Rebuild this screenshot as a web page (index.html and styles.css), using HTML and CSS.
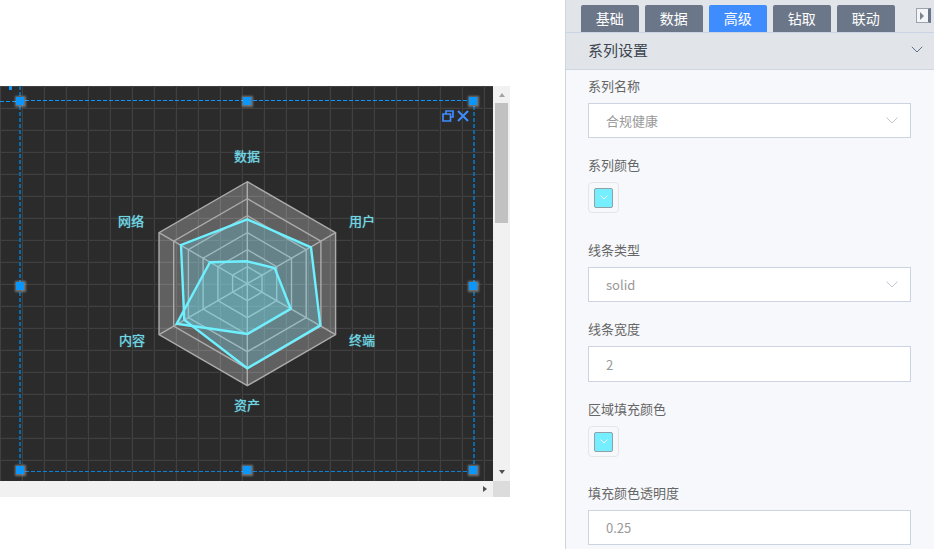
FILE: index.html
```html
<!DOCTYPE html>
<html lang="zh">
<head>
<meta charset="utf-8">
<title>雷达图设置</title>
<link rel="stylesheet" href="styles.css">
</head>
<body>
<div class="page">
  <main class="stage">
    <div class="scroller">
      <div class="scroll-row">
        <div class="canvas">
          <span class="tick"></span>
          <span class="guide guide-h"></span>
          <span class="guide guide-v"></span>
          <svg class="radar" width="493" height="395" viewBox="0 86 493 395">
            <polygon class="radar-bg" points="247.3,181.7 335.6,232.7 335.6,334.7 247.3,385.7 159,334.7 159,232.7"/>
            <g class="rings">
              <polygon points="247.3,181.7 335.6,232.7 335.6,334.7 247.3,385.7 159,334.7 159,232.7"/>
              <polygon points="247.3,198.7 320.9,241.2 320.9,326.2 247.3,368.7 173.7,326.2 173.7,241.2"/>
              <polygon points="247.3,215.7 306.2,249.7 306.2,317.7 247.3,351.7 188.4,317.7 188.4,249.7"/>
              <polygon points="247.3,232.7 291.5,258.2 291.5,309.2 247.3,334.7 203.1,309.2 203.1,258.2"/>
              <polygon points="247.3,249.7 276.7,266.7 276.7,300.7 247.3,317.7 217.9,300.7 217.9,266.7"/>
              <polygon points="247.3,266.7 262,275.2 262,292.2 247.3,300.7 232.6,292.2 232.6,275.2"/>
              <path d="M247.3 181.7V385.7M159 232.7L335.6 334.7M159 334.7L335.6 232.7"/>
            </g>
            <g class="series">
              <polygon points="247.3,219.3 311,247.3 320.3,325.3 247.3,368.3 184.3,320 181,245"/>
              <polygon points="247.3,261.3 274.7,268 290.7,308.7 247.3,334 176.7,323.7 210,262.3"/>
            </g>
            <g class="axis-labels" text-anchor="middle">
              <text x="247" y="161">数据</text>
              <text x="362" y="226">用户</text>
              <text x="362" y="345">终端</text>
              <text x="247" y="410">资产</text>
              <text x="132" y="345">内容</text>
              <text x="131" y="226">网络</text>
            </g>
          </svg>
          <div class="selection">
            <span class="handle h-tl"></span><span class="handle h-tc"></span><span class="handle h-tr"></span>
            <span class="handle h-ml"></span><span class="handle h-mr"></span>
            <span class="handle h-bl"></span><span class="handle h-bc"></span><span class="handle h-br"></span>
            <div class="tools">
              <svg width="12" height="12" viewBox="0 0 12 12"><path d="M4 3.5V1h7v6H8.5M1 4h7.5v7H1z" fill="none" stroke="#3f8cff" stroke-width="1.7"/></svg>
              <svg width="12" height="12" viewBox="0 0 12 12"><path d="M1 1l10 10M11 1L1 11" fill="none" stroke="#3f8cff" stroke-width="2"/></svg>
            </div>
          </div>
        </div>
        <div class="vbar">
          <span class="arrow arrow-up"></span>
          <span class="vthumb"></span>
          <span class="arrow arrow-down"></span>
        </div>
      </div>
      <div class="hbar-row">
        <div class="hbar"><span class="arrow arrow-right"></span></div>
        <span class="corner"></span>
      </div>
    </div>
  </main>
  <aside class="panel">
    <div class="panel-head">
      <nav class="tabs">
        <span class="tab">基础</span>
        <span class="tab">数据</span>
        <span class="tab tab-active">高级</span>
        <span class="tab">钻取</span>
        <span class="tab">联动</span>
        <span class="collapse"><span class="collapse-tri"></span></span>
      </nav>
      <div class="section">
        <span>系列设置</span>
        <svg width="12" height="7" viewBox="0 0 12 7"><path d="M.8.8L6 6l5.2-5.2" fill="none" stroke="#5f6f86" stroke-width="1"/></svg>
      </div>
    </div>
    <form class="form">
      <div class="item">
        <label class="label">系列名称</label>
        <div class="control"><span>合规健康</span><svg width="12" height="7" viewBox="0 0 12 7"><path d="M.6.6L6 6l5.4-5.4" fill="none" stroke="#c0c4cc"/></svg></div>
      </div>
      <div class="item item-swatch">
        <label class="label">系列颜色</label>
        <div class="swatch"><span class="swatch-fill"><svg width="8" height="5" viewBox="0 0 8 5"><path d="M.7.7L4 4 7.3.7" fill="none" stroke="#fff"/></svg></span></div>
      </div>
      <div class="item">
        <label class="label">线条类型</label>
        <div class="control"><span>solid</span><svg width="12" height="7" viewBox="0 0 12 7"><path d="M.6.6L6 6l5.4-5.4" fill="none" stroke="#c0c4cc"/></svg></div>
      </div>
      <div class="item">
        <label class="label">线条宽度</label>
        <div class="control control-tall"><span>2</span></div>
      </div>
      <div class="item item-swatch-last">
        <label class="label">区域填充颜色</label>
        <div class="swatch"><span class="swatch-fill"><svg width="8" height="5" viewBox="0 0 8 5"><path d="M.7.7L4 4 7.3.7" fill="none" stroke="#fff"/></svg></span></div>
      </div>
      <div class="item">
        <label class="label">填充颜色透明度</label>
        <div class="control"><span>0.25</span></div>
      </div>
    </form>
  </aside>
</div>
</body>
</html>
```
FILE: styles.css
```css
* { box-sizing: border-box; }
html, body { margin: 0; padding: 0; height: 100%; overflow: hidden; background: #fff; }
body { font-family: "Noto Sans CJK SC", "Liberation Sans", sans-serif; }
.page { display: flex; width: 934px; height: 549px; }
.stage { width: 565px; flex: none; padding-top: 86px; }
.scroller { width: 510px; }
.scroll-row { display: flex; height: 395px; }
.canvas {
  position: relative; width: 493px; height: 395px; flex: none; overflow: hidden;
  background-color: #2b2b2b;
  background-image:
    linear-gradient(to right, #2f2f2f 1px, #404040 1px 2px, transparent 2px),
    linear-gradient(to bottom, #2f2f2f 1px, #404040 1px 2px, transparent 2px);
  background-size: 22px 22px;
  background-position: -1px -1px;
}
.radar { position: absolute; left: 0; top: 0; display: block; }
.radar-bg { fill: rgba(255,255,255,.25); }
.rings { fill: none; stroke: #ababab; stroke-width: 1.4; }
.series { fill: rgba(110,232,250,.25); stroke: #6ef0ff; stroke-width: 2.4; }
.axis-labels { font-size: 13px; fill: #6fd6e4; text-shadow: 0 0 1px #6fd6e4; }
.tick { position: absolute; left: 9px; top: 0; width: 3px; height: 4px; background: #0a96fa; }
.guide { position: absolute; }
.guide-h { left: 0; top: 15px; width: 17px; height: 1px; background: repeating-linear-gradient(to right, #0a96fa 0 4px, transparent 4px 6px); }
.guide-v { left: 19px; top: 0; width: 2px; height: 12px; background: repeating-linear-gradient(to bottom, #0a6aa8 0 4px, transparent 4px 6px); }
.selection {
  position: absolute; left: 19px; top: 14px; width: 456px; height: 372px;
  background-image:
    repeating-linear-gradient(to right, #0a96fa 0 4px, transparent 4px 6px),
    repeating-linear-gradient(to right, #0a80d8 0 4px, transparent 4px 6px),
    repeating-linear-gradient(to bottom, #0a6aa8 0 4px, transparent 4px 6px),
    repeating-linear-gradient(to bottom, #0a6aa8 0 4px, transparent 4px 6px);
  background-size: 100% 1px, 100% 1px, 2px 100%, 2px 100%;
  background-position: left top, left bottom, left top, right top;
  background-repeat: no-repeat;
}
.handle {
  position: absolute; width: 8px; height: 8px; background: #0a96fa;
  box-shadow: 0 0 2px 1.5px rgba(255,255,255,.35);
}
.h-tl { left: -3px; top: -3px; } .h-tc { left: 224px; top: -3px; } .h-tr { left: 450px; top: -3px; }
.h-ml { left: -3px; top: 182px; } .h-mr { left: 450px; top: 182px; }
.h-bl { left: -3px; top: 366px; } .h-bc { left: 224px; top: 366px; } .h-br { left: 450px; top: 366px; }
.tools { position: absolute; right: 6px; top: 10px; display: flex; gap: 3px; align-items: center; }
.tools svg { display: block; }
.vbar { width: 17px; background: #f1f1f1; display: flex; flex-direction: column; align-items: center; }
.vthumb { width: 13px; height: 120px; margin-top: 6px; background: #c1c1c1; }
.arrow { width: 0; height: 0; border-style: solid; border-color: transparent; display: block; }
.arrow-up { margin-top: 7px; border-width: 0 3.5px 4px; border-bottom-color: #a3a3a3; }
.arrow-down { margin-top: auto; margin-bottom: 7px; border-width: 4px 3.5px 0; border-top-color: #505050; }
.hbar-row { display: flex; height: 16px; }
.hbar { width: 493px; background: #f1f1f1; display: flex; justify-content: flex-end; align-items: center; padding-right: 6px; }
.arrow-right { border-width: 3.5px 0 3.5px 4px; border-left-color: #505050; }
.corner { width: 17px; background: #dcdcdc; }
.panel { width: 369px; flex: none; height: 549px; background: #f6f8fb; border-left: 1px solid #ced4dc; }
.panel-head { height: 70px; background: #e1e5ea; border-bottom: 1px solid #ced6e0; }
.tabs { display: flex; align-items: flex-end; gap: 6.3px; height: 33px; padding-left: 15px; border-bottom: 1px solid #c9d5e4; position: relative; }
.tab {
  width: 57.7px; height: 27px; background: #6b7788; color: #fff; border-radius: 2px 2px 0 0;
  font-size: 14px; line-height: 26px; text-align: center;
}
.tab-active { background: #3f8cff; }
.collapse { position: absolute; left: 350px; top: 8px; width: 15px; height: 15px; background: #f3f5f8; border: 1px solid #9aa3ae; border-right: 3px solid #6b7788; display: flex; align-items: center; padding-left: 3px; }
.collapse-tri { width: 0; height: 0; border-style: solid; border-color: transparent; border-width: 4px 0 4px 4px; border-left-color: #7d8690; }
.section { height: 36px; padding: 0 11px 3px 22px; display: flex; align-items: center; justify-content: space-between; font-size: 15px; color: #3d4650; }
.form { padding: 6px 22px 0 22px; }
.item { margin-bottom: 17px; }
.item-swatch { margin-bottom: 27px; }
.item-swatch-last { margin-bottom: 26px; }
.label { display: block; font-size: 13px; line-height: 20px; height: 22px; color: #666; margin-bottom: 5px; }
.control { width: 323px; height: 35px; background: #fff; border: 1px solid #ccd4e2; display: flex; align-items: center; justify-content: space-between; padding: 0 12px 0 17px; font-size: 13px; color: #999; }
.control-tall { height: 36px; }
.swatch { width: 31px; height: 31px; border: 1px solid #e6e6e6; border-radius: 4px; display: flex; align-items: center; justify-content: center; }
.swatch-fill { width: 19px; height: 20px; background: #75eeff; border: 1px solid #8fa0a6; border-radius: 2px; display: flex; align-items: center; justify-content: center; }
.swatch-fill svg { display: block; }
```
